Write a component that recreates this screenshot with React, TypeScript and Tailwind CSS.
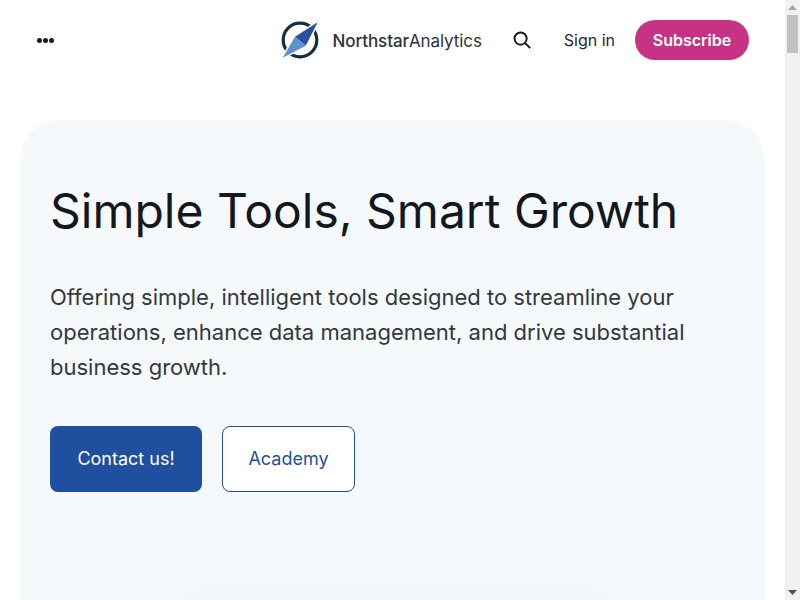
import React from 'react';

const CompassLogo = () => (
  <svg width="40" height="40" viewBox="0 0 40 40" fill="none">
    <circle cx="20" cy="20" r="16.8" stroke="#16303f" strokeWidth="3.2" />
    <path d="M37.7 2.3 L15 16.7 L2.7 37.7 L25.7 25.7 Z" stroke="#fff" strokeWidth="3" strokeLinejoin="round" />
    <path d="M37.7 2.3 L25.7 25.7 L15 16.7 Z" fill="#2a50a0" />
    <path d="M2.7 37.7 L15 16.7 L25.7 25.7 Z" fill="#5b93cd" />
  </svg>
);

const SearchIcon = () => (
  <svg width="20" height="20" viewBox="0 0 20 20" fill="none" stroke="#16191d" strokeWidth="1.9">
    <circle cx="8.6" cy="8.6" r="6.1" />
    <path d="M13 13 L18.2 18.2" />
  </svg>
);

const Scrollbar = () => (
  <div className="flex h-full w-[15px] shrink-0 flex-col items-center bg-[#f1f1f1]">
    <svg className="mt-[5px]" width="9" height="5" viewBox="0 0 9 5">
      <path d="M4.5 0 L9 5 H0 Z" fill="#a3a3a3" />
    </svg>
    <div className="mt-[5px] h-[38px] w-[11px] bg-[#c1c1c1]" />
    <svg className="mt-auto mb-[5px]" width="9" height="5" viewBox="0 0 9 5">
      <path d="M0 0 H9 L4.5 5 Z" fill="#505050" />
    </svg>
  </div>
);

export default function App() {
  return (
    <div className="flex h-[600px] overflow-hidden bg-white font-['Inter',sans-serif] [font-optical-sizing:none]">
      <div className="min-w-0 flex-1">
        <header className="flex h-20 items-center px-[36px]">
          <button className="ml-px flex items-center gap-[1px]">
            <span className="h-[5px] w-[5px] rounded-full bg-[#16191d]" />
            <span className="h-[5px] w-[5px] rounded-full bg-[#16191d]" />
            <span className="h-[5px] w-[5px] rounded-full bg-[#16191d]" />
          </button>
          <div className="ml-auto flex items-center">
            <CompassLogo />
            <span className="mt-[3px] ml-[13px] text-[17px] tracking-[-0.1px] text-[#2d3338]">
              <span className="font-medium">Northstar</span>Analytics
            </span>
            <span className="ml-[30px]">
              <SearchIcon />
            </span>
            <a className="ml-[32px] text-[16px] text-[#24282d]">Sign in</a>
            <a className="ml-[20px] flex h-10 w-[114px] items-center justify-center rounded-full bg-[#c73285] text-[16px] font-semibold text-white">
              Subscribe
            </a>
          </div>
        </header>
        <main className="px-5 pt-10">
          <section className="h-[900px] rounded-[40px] bg-[#f5f9fc] px-[30px] pt-[56px]">
            <h1 className="text-[48px] leading-[70px] font-normal text-[#14181d]">Simple Tools, Smart Growth</h1>
            <p className="mt-[34px] max-w-[660px] text-[22px] leading-[35px] text-[#33383d]">
              Offering simple, intelligent tools designed to streamline your operations, enhance data management, and
              drive substantial business growth.
            </p>
            <div className="mt-[41px] flex gap-5">
              <a className="flex h-[66px] w-[152px] items-center justify-center rounded-lg bg-[#1f4f9f] pb-px text-[18px] text-white">
                Contact us!
              </a>
              <a className="flex h-[66px] w-[133px] items-center justify-center rounded-lg border border-[#1f4f9f] bg-white pb-px text-[18px] text-[#1f4f9f]">
                Academy
              </a>
            </div>
            <div className="mx-auto mt-[120px] h-[300px] w-[420px] rounded-lg bg-[#f5f9fc] shadow-[0_-4px_30px_rgba(60,80,100,0.08)]" />
          </section>
        </main>
      </div>
      <Scrollbar />
    </div>
  );
}
